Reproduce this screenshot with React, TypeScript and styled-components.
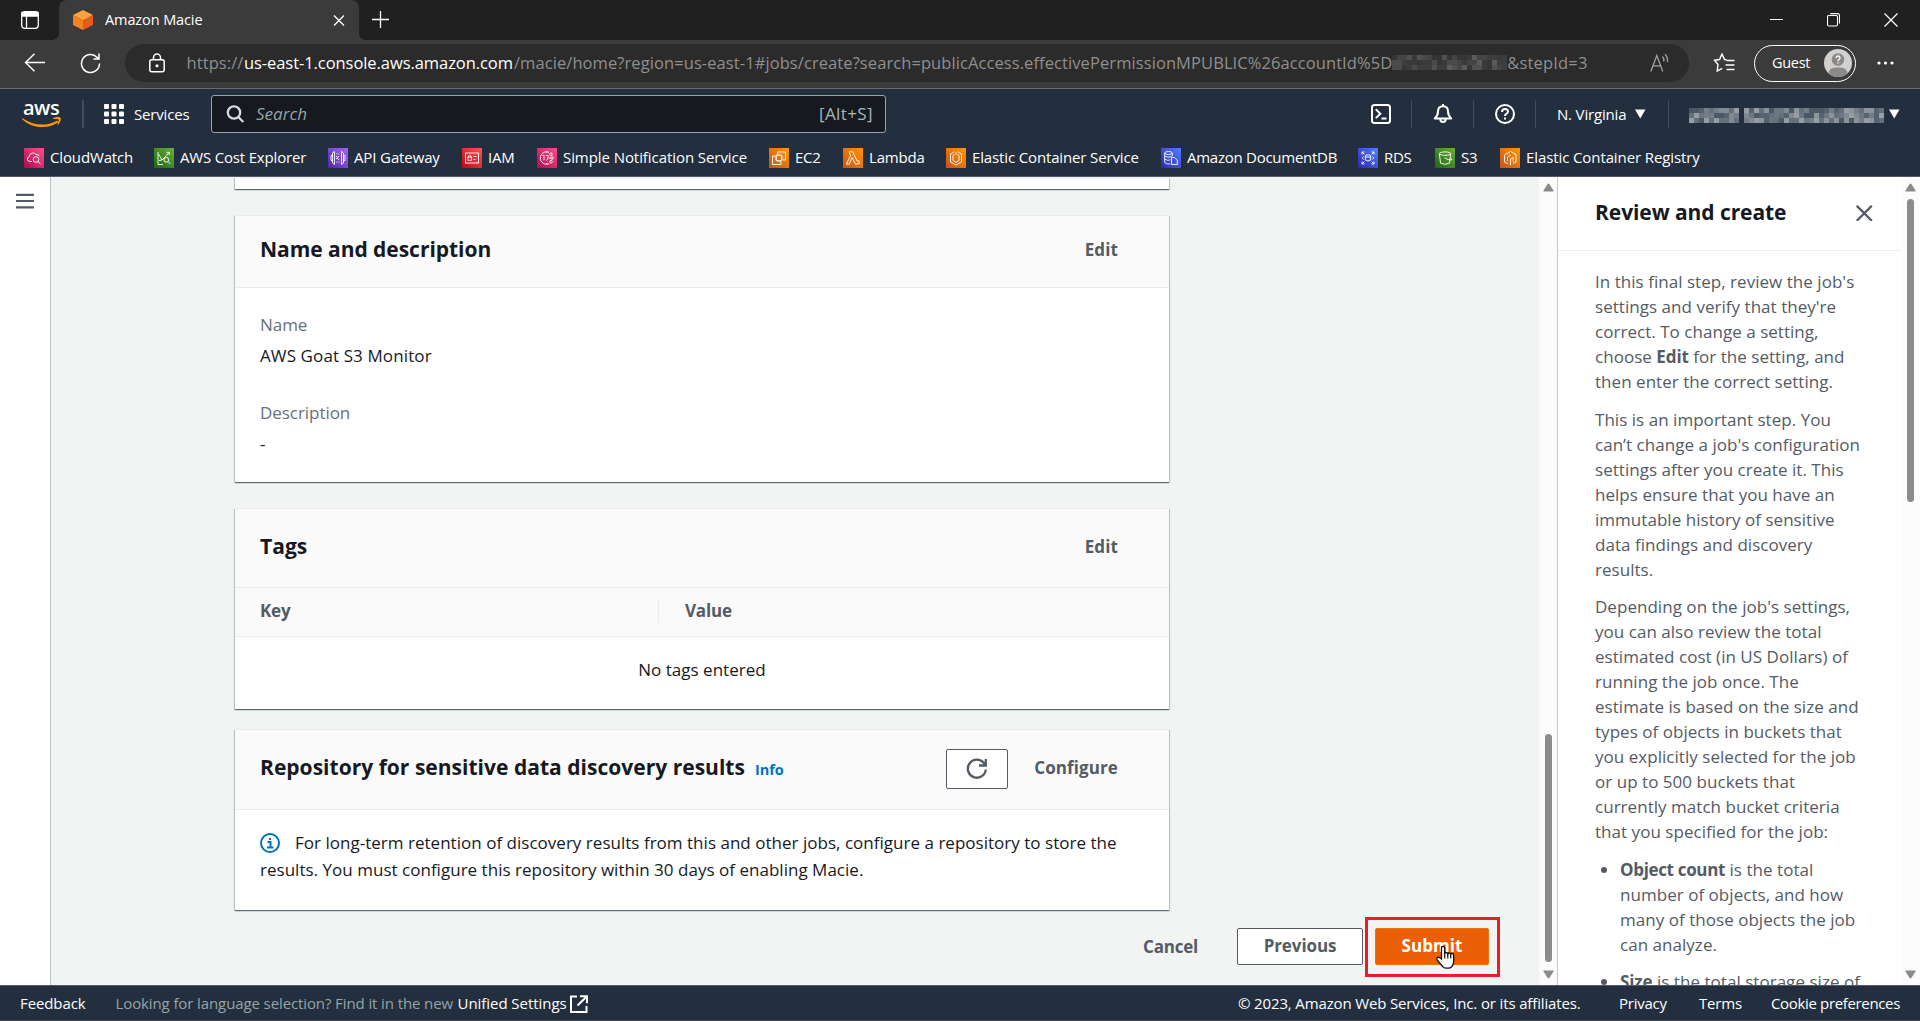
import React from 'react';
import styled, { createGlobalStyle } from 'styled-components';

const GlobalStyle = createGlobalStyle`
  * { box-sizing: border-box; }
  body { margin: 0; }
  svg { display: block; flex: none; }
`;

const Page = styled.div`
  display: flex;
  flex-direction: column;
  width: 1920px;
  height: 1021px;
  overflow: hidden;
  background: #f2f3f3;
  color: #16191f;
  font: 400 17px/27.5px 'Open Sans', 'Noto Sans', sans-serif;
  letter-spacing: 0.015px;
  white-space: nowrap;
`;

/* ---------- browser chrome ---------- */

const TabStrip = styled.div`
  display: flex;
  align-items: center;
  height: 40px;
  background: #202020;
  color: #fff;
  padding-left: 21px;
`;

const BrowserTab = styled.div`
  position: relative;
  display: flex;
  align-items: center;
  width: 300px;
  height: 40px;
  margin: 0 13px 0 20px;
  padding: 0 14px;
  border-radius: 8px 8px 0 0;
  background: #3b3b3b;
  &::before,
  &::after {
    content: '';
    position: absolute;
    bottom: 0;
    width: 6px;
    height: 6px;
  }
  &::before {
    left: -6px;
    background: radial-gradient(circle at 0 0, transparent 5.5px, #3b3b3b 6px);
  }
  &::after {
    right: -6px;
    background: radial-gradient(circle at 100% 0, transparent 5.5px, #3b3b3b 6px);
  }
`;

const TabTitle = styled.span`
  flex: 1;
  margin-left: 12px;
  font-size: 14.5px;
  letter-spacing: -0.1px;
`;

const WindowButtons = styled.div`
  display: flex;
  gap: 44px;
  margin-left: auto;
  padding-right: 22px;
`;

const Toolbar = styled.div`
  display: flex;
  align-items: center;
  height: 49px;
  padding: 0 0 2px 24px;
  background: #3b3b3b;
  border-bottom: 1px solid #6c6c6a;
`;

const ToolIcon = styled.span<{ $gap: number }>`
  margin-right: ${(p) => p.$gap}px;
`;

const AddressBar = styled.div`
  display: flex;
  flex: none;
  align-items: center;
  width: 1564px;
  height: 38px;
  margin-top: -1px;
  padding: 0 19px 0 24px;
  border-radius: 19px;
  background: #2b2b2b;
`;

const Url = styled.div`
  display: flex;
  align-items: center;
  flex: 1;
  margin-left: 21.5px;
  color: #8f8f8f;
  font-size: 16.5px;
  letter-spacing: 0.083px;
`;

const UrlHost = styled.span`
  margin: 0 1px 0 0.5px;
  color: #fff;
  letter-spacing: -0.065px;
`;

const UrlTail = styled.span`
  letter-spacing: 0.18px;
`;

const Profile = styled.div`
  display: flex;
  align-items: center;
  justify-content: space-between;
  width: 102px;
  height: 37px;
  margin: 0 21px 0 19px;
  padding: 0 3px 0 17px;
  border: 1.5px solid #fff;
  border-radius: 19px;
  color: #fff;
  font-size: 14.5px;
  letter-spacing: -0.3px;
`;

/* ---------- console header ---------- */

const ConsoleHeader = styled.header`
  height: 88px;
  background: #232f3e;
  border-bottom: 1px solid #545b64;
  color: #fff;
  font-weight: 500;
  font-size: 15px;
  letter-spacing: -0.14px;
`;

const HeaderRow = styled.div`
  display: flex;
  align-items: center;
  height: 50px;
  padding-left: 22px;
`;

const Divider = styled.i<{ $before: number; $after: number; $width?: number }>`
  width: ${(p) => p.$width ?? 1}px;
  height: 28px;
  margin: 0 ${(p) => p.$after}px 0 ${(p) => p.$before}px;
  background: #414d5c;
`;

const ServicesLabel = styled.span`
  width: 77px;
  margin: 1px 0 0 10px;
  letter-spacing: -0.18px;
`;

const SearchBox = styled.div`
  display: flex;
  align-items: center;
  width: 675px;
  height: 38px;
  padding: 0 12px 0 14px;
  border: 1px solid #95a5a6;
  border-radius: 3px;
  background: #16191f;
  color: #aab7b8;
  font-weight: 400;
  font-size: 17px;
`;

const Placeholder = styled.em`
  flex: 1;
  margin-left: 11px;
  color: #95a5a6;
  letter-spacing: 0.02px;
`;

const Shortcut = styled.span`
  letter-spacing: 0.4px;
`;

const HeaderTools = styled.div`
  display: flex;
  align-items: center;
  margin-left: 485px;
`;

const Region = styled.span`
  width: 78px;
  margin-top: 1px;
  letter-spacing: -0.17px;
`;

const AccountName = styled.span`
  display: flex;
  gap: 5px;
  margin: 3px 5px 0 0;
`;

const Favorites = styled.nav`
  display: flex;
  align-items: center;
  height: 37px;
  padding-left: 24px;
`;

const Favorite = styled.a<{ $width: number; $track: number }>`
  display: flex;
  align-items: center;
  gap: 6px;
  width: ${(p) => p.$width}px;
  letter-spacing: ${(p) => p.$track}px;
`;

/* ---------- main area ---------- */

const Workspace = styled.div`
  display: flex;
  height: 808px;
  overflow: hidden;
`;

const NavRail = styled.aside`
  width: 51px;
  padding: 16px 0 0 16px;
  border-right: 1px solid #bcc3c4;
  background: #fff;
`;

const Main = styled.main`
  width: 1488px;
  padding-left: 184px;
`;

const Card = styled.section<{ $height: number; $gap: number }>`
  width: 934px;
  height: ${(p) => p.$height}px;
  margin-bottom: ${(p) => p.$gap}px;
  border-top: 1px solid #eaeded;
  background: #fff;
  box-shadow: 0 1px 1px 0 rgba(0, 28, 36, 0.45), 1px 1px 1px 0 rgba(0, 28, 36, 0.17),
    -1px 1px 1px 0 rgba(0, 28, 36, 0.17);
`;

const CardHeader = styled.div<{ $height: number; $pad?: number }>`
  display: flex;
  align-items: center;
  height: ${(p) => p.$height}px;
  padding: 0 51px ${(p) => p.$pad ?? 3}px 25px;
  border-bottom: 1px solid #eaeded;
  background: #fafafa;
`;

const Heading = styled.h2<{ $track?: number }>`
  margin: 0;
  color: #16191f;
  font-size: 21px;
  font-weight: 700;
  letter-spacing: ${(p) => p.$track ?? 0.02}px;
`;

const InfoLink = styled.a`
  margin: 4px 0 0 10px;
  color: #0073bb;
  font-size: 14.5px;
  font-weight: 700;
  letter-spacing: -0.05px;
`;

const TextAction = styled.span`
  margin-left: auto;
  color: #545b64;
  font-weight: 700;
  letter-spacing: 0.1px;
`;

const RefreshButton = styled.button`
  display: flex;
  align-items: center;
  justify-content: center;
  width: 62px;
  height: 40px;
  margin: 2px 26px 0 auto;
  padding: 0;
  border: 1px solid #545b64;
  border-radius: 2px;
  background: #fff;
  & + ${TextAction} {
    margin-left: 0;
  }
`;

const Fields = styled.dl`
  margin: 0;
  padding: 23px 25px;
`;

const FieldLabel = styled.dt`
  color: #687078;
  letter-spacing: -0.05px;
`;

const FieldValue = styled.dd`
  margin: 3px 0 30px;
  letter-spacing: 0.11px;
`;

const TableHead = styled.div`
  display: flex;
  align-items: center;
  height: 49px;
  padding: 0 25px 2px;
  border-bottom: 1px solid #eaeded;
  background: #fafafa;
  color: #545b64;
  font-weight: 700;
  letter-spacing: -0.2px;
`;

const Column = styled.span<{ $width?: number }>`
  width: ${(p) => (p.$width ? `${p.$width}px` : 'auto')};
  padding-left: ${(p) => (p.$width ? 0 : 26)}px;
  border-left: ${(p) => (p.$width ? 0 : 1)}px solid #eaeded;
  line-height: 24px;
`;

const EmptyRow = styled.p`
  margin: 0;
  padding-top: 19px;
  text-align: center;
`;

const Notice = styled.p`
  margin: 0;
  padding: 19px 25px;
  line-height: 27px;
  letter-spacing: 0.02px;
`;

const NoticeLine = styled.span`
  display: flex;
  align-items: center;
  gap: 15px;
`;

const WizardActions = styled.footer`
  display: flex;
  align-items: center;
  height: 37px;
  padding-left: 908px;
  color: #545b64;
  font-weight: 700;
`;

const CancelLink = styled.a`
  width: 94px;
  letter-spacing: -0.2px;
`;

const ActionButton = styled.button<{ $primary?: boolean }>`
  display: block;
  width: ${(p) => (p.$primary ? 114 : 126)}px;
  height: 37px;
  padding: 0 0 2px;
  border: 1px solid ${(p) => (p.$primary ? '#ec7211' : '#545b64')};
  border-radius: 2px;
  background: ${(p) => (p.$primary ? '#eb5f07' : '#fff')};
  color: ${(p) => (p.$primary ? '#fff' : '#545b64')};
  font: inherit;
  letter-spacing: ${(p) => (p.$primary ? 0.06 : -0.1)}px;
`;

const SubmitSlot = styled.div`
  position: relative;
  margin-left: 12px;
`;

const Highlight = styled.div`
  position: absolute;
  left: -10px;
  top: -11px;
  width: 135px;
  height: 60px;
  border: 3px solid #ed1c24;
`;

const Pointer = styled.svg`
  position: absolute;
  left: 60px;
  top: 17px;
`;

const ScrollTrack = styled.div<{ $width: number }>`
  display: flex;
  flex-direction: column;
  align-items: center;
  width: ${(p) => p.$width}px;
  height: 808px;
  padding: 6px 0 6px;
  background: #fcfcfc;
`;

const ScrollThumb = styled.i<{ $top: number; $height: number }>`
  width: 7px;
  height: ${(p) => p.$height}px;
  margin: ${(p) => p.$top}px 0 auto;
  border-radius: 4px;
  background: #8b8b8b;
`;

const HelpPanel = styled.aside`
  width: 344px;
  height: 808px;
  overflow: hidden;
  border-left: 1px solid #c4c9ca;
  background: #fff;
  color: #545b64;
  line-height: 25px;
`;

const HelpHeader = styled.div`
  display: flex;
  align-items: center;
  justify-content: space-between;
  height: 74px;
  padding: 0 28px 3px 37px;
  border-bottom: 1px solid #eaeded;
`;

const HelpBody = styled.div`
  padding: 18px 0 0 37px;
`;

const HelpText = styled.p`
  margin: 0 0 12.5px;
  letter-spacing: 0.035px;
`;

const HelpList = styled.ul`
  margin: 0;
  padding-left: 25px;
`;

const HelpItem = styled.li`
  margin-bottom: 12.5px;
  letter-spacing: 0.035px;
`;

const Strong = styled.b<{ $track?: number }>`
  letter-spacing: ${(p) => p.$track ?? -0.1}px;
`;

const PageFooter = styled.footer`
  display: flex;
  align-items: center;
  height: 36px;
  padding: 1px 0 0 20px;
  border-top: 1px solid #545b64;
  border-bottom: 1px solid #4b4b49;
  background: #232f3e;
  color: #fff;
  font-size: 15px;
  font-weight: 500;
`;

const FooterText = styled.span<{ $width: number; $track: number; $muted?: boolean }>`
  flex: none;
  width: ${(p) => p.$width}px;
  color: ${(p) => (p.$muted ? '#95a5a6' : '#fff')};
  font-weight: ${(p) => (p.$muted ? 400 : 500)};
  letter-spacing: ${(p) => p.$track}px;
`;

const LegalLinks = styled.div`
  display: flex;
  margin-left: auto;
`;

/* ---------- drawings ---------- */

const Caret = () => (
  <svg width="11" height="10" viewBox="0 0 11 10">
    <path d="M0 .5h10.5L5.25 9.5z" fill="#fff" />
  </svg>
);

const ScrollArrow = ({ down = false }: { down?: boolean }) => (
  <svg width="11" height="9" viewBox="0 0 11 9">
    <path
      d={down ? 'M1 .5h9q1 0 .5 1L6.5 7.8q-1 1.2-2 0L.5 1.5Q0 .5 1 .5z' : 'M1 8.5h9q1 0 .5-1L6.5 1.2q-1-1.2-2 0L.5 7.5q-.5 1 .5 1z'}
      fill="#8b8b8b"
    />
  </svg>
);

type MosaicProps = { cols: number; rows: number; cell: number; palette: string[] };

/* Redacted text: a grid of pixelated colour cells. */
const Mosaic = ({ cols, rows, cell, palette }: MosaicProps) => {
  const cells = [];
  let seed = cols * 31 + 7;
  for (let r = 0; r < rows; r++) {
    for (let c = 0; c < cols; c++) {
      seed = (seed * 1103515245 + 12345) % 2147483648;
      const pick = Math.floor(seed / 65536) % palette.length;
      cells.push(<rect key={`${r}-${c}`} x={c * cell} y={r * cell} width={cell} height={cell} fill={palette[pick]} />);
    }
  }
  return (
    <svg width={cols * cell} height={rows * cell} shapeRendering="crispEdges">
      {cells}
    </svg>
  );
};

const accountPalette = ['#6b7683', '#8c939b', '#56626f', '#737e88', '#989da2', '#4b5967', '#66707c', '#646f80', '#808a90'];
const urlPalette = ['#3a3a3b', '#505153', '#353536', '#434446', '#5a5b5d', '#3d3d3e', '#494a4b'];

type Glyph = 'watch' | 'cost' | 'api' | 'iam' | 'sns' | 'ec2' | 'lambda' | 'ecs' | 'docdb' | 'rds' | 's3' | 'ecr';

const tones: Record<string, [string, string]> = {
  pink: ['#b0084d', '#ff4f8b'],
  green: ['#1b660f', '#6cae3e'],
  purple: ['#4d27a8', '#a166ff'],
  red: ['#bd0816', '#ff5252'],
  orange: ['#c8511b', '#ff9900'],
  blue: ['#2e27ad', '#527fff'],
};

const glyphs: Record<Glyph, React.ReactNode> = {
  watch: (
    <>
      <path d="M8 13.5H6a2.6 2.6 0 0 1-.6-5.1A3.6 3.6 0 0 1 12 6.6a2.4 2.4 0 0 1 3.2 1.8" />
      <circle cx="12" cy="11.5" r="2.8" />
      <path d="m14 13.5 2.6 2.6" />
    </>
  ),
  cost: (
    <>
      <path d="M4 4v12.500h5M4.500 6l3.500 6 2-2 5-5.500M5 12.500l3-.5M12.500 4.300h2.800v2.700" />
      <circle cx="12.300" cy="11.800" r="2.400" />
      <path d="m14 13.600 2.400 2.400" />
    </>
  ),
  api: (
    <>
      <path d="M6.500 3.500 4.500 5v10l2 1.500zM13.500 3.500l2 1.500v10l-2 1.500zM4.500 7.500H3v5h1.500M15.500 7.500H17v5h-1.500" />
      <path d="M11 8 9.200 10l1.800 2" />
      <path d="M8.300 5.800h4M8.300 14.200h4M8.500 8v4" strokeDasharray="1 1" />
    </>
  ),
  iam: (
    <>
      <rect x="3.500" y="5" width="13" height="10" />
      <rect x="5.800" y="9.200" width="3.800" height="3" />
      <path d="M6.500 9V8q1.200-1.500 2.400 0v1M11.500 8.500h3M11.500 11.500h2" />
    </>
  ),
  sns: (
    <>
      <path d="M12 4.300a6.200 6.200 0 1 0 0 11.400M10 3.600V5M10 15v1.400" />
      <path d="M5.500 7.500H7v4.800M8.500 7.500h2.700v1.200l-1.500 3.800" />
      <circle cx="14" cy="6.300" r="1.300" />
      <circle cx="15" cy="10" r="1.300" />
      <circle cx="14" cy="13.700" r="1.300" />
      <path d="M11.500 10h2.200" />
    </>
  ),
  ec2: (
    <>
      <path d="M8.500 6.500V4h8v8H14M6.500 8H3.500v8.500h8.500V14" />
      <rect x="7.300" y="7.300" width="5.400" height="5.400" />
      <path d="M9 5.800v1.500M11 5.800v1.500M9 12.700v1.500M11 12.700v1.500M5.800 9h1.500M5.800 11h1.500M12.700 9h1.500M12.700 11h1.500" />
    </>
  ),
  lambda: (
    <path d="M6.500 3.800h3.200l4.500 9.400 1.500-.6 1 2.600-4.200 1.200-3.400-7-2.900 6.800H3.400l4.300-9.100-.6-1.200h-.6z" />
  ),
  ecs: (
    <>
      <path d="M8.200 3.800 4.500 6v8l5.500 3 5.500-3V6l-3.700-2.200" />
      <path d="M8.500 6.500 7 7.500v5l3 1.800 3-1.800v-5l-1.500-1M10 4v3" />
    </>
  ),
  docdb: (
    <>
      <ellipse cx="7.500" cy="5" rx="3.800" ry="1.500" />
      <path d="M3.700 5v9.500q1.500 2 5.500 1.400M3.700 8q3 2 7 .5M3.700 11q2.500 2 5.500 1M11.300 5v3" />
      <path d="M10.500 9.500h3l2.800 2.500v4.500h-5.800z" />
    </>
  ),
  rds: (
    <>
      <path d="M4 6.500V4h2.500M4 4l2.500 2.500M13.500 4H16v2.500M16 4l-2.500 2.500M4 13.500V16h2.500M4 16l2.500-2.500M13.500 16H16v-2.500M16 16l-2.500-2.500" />
      <ellipse cx="10" cy="8" rx="2.600" ry="1.200" />
      <path d="M7.400 8v4q2.600 2 5.200 0V8M5.500 8.500 4.300 10l1.200 1.500M14.500 8.500l1.200 1.500-1.200 1.500" />
    </>
  ),
  s3: (
    <>
      <ellipse cx="10" cy="5.600" rx="5.700" ry="1.700" />
      <path d="m4.300 5.800 1.300 9.400q4.400 2.200 8.800 0l1.300-9.400" />
      <path d="M9.500 9.800q4 2.500 7 2.300.6-1.200-1.300-2.300" />
    </>
  ),
  ecr: (
    <>
      <path d="M8 15.800 4.500 14V7l6-3.500 5.500 3v7.500L13 15.500" />
      <path d="M10.500 17v-6l2.700-1.700v5M7.500 13V9l3.500-2" />
    </>
  ),
};

const ServiceIcon = ({ tone, glyph }: { tone: string; glyph: Glyph }) => (
  <svg width="20" height="20" viewBox="0 0 20 20" fill="none" stroke="#fff" strokeWidth=".9">
    <defs>
      <linearGradient id={`tone-${glyph}`} x1="0" y1="1" x2="1" y2="0">
        <stop offset="0" stopColor={tones[tone][0]} />
        <stop offset="1" stopColor={tones[tone][1]} />
      </linearGradient>
    </defs>
    <rect width="20" height="20" fill={`url(#tone-${glyph})`} stroke="none" />
    {glyphs[glyph]}
  </svg>
);

const AwsLogo = () => (
  <svg width="40" height="30" viewBox="0 -2 40 30">
    <text x="1" y="13.500" fill="#fff" fontFamily="Open Sans, sans-serif" fontSize="20" fontWeight="600" textLength="36.500">
      aws
    </text>
    <path d="M.5 17.300c11 7.800 24 8 34 2.600 1.300-.7 2.300.7 1 1.700C25.500 28.800 9.500 27.200.2 18.200c-.6-.6-.3-1.300.3-.9z" fill="#f90" />
    <path d="M31 17.300c2.600-1.700 7-1.300 7.600-.5.6.9-.2 5-2.700 7-.4.300-.8.100-.6-.3.600-1.400 1.800-4.400 1.200-5.100-.5-.7-3.700-.5-5.100-.3-.5 0-.7-.5-.4-.8z" fill="#f90" />
  </svg>
);

const favorites: { label: string; tone: string; glyph: Glyph; width: number; track: number }[] = [
  { label: 'CloudWatch', tone: 'pink', glyph: 'watch', width: 130, track: -0.14 },
  { label: 'AWS Cost Explorer', tone: 'green', glyph: 'cost', width: 174, track: -0.18 },
  { label: 'API Gateway', tone: 'purple', glyph: 'api', width: 134, track: -0.12 },
  { label: 'IAM', tone: 'red', glyph: 'iam', width: 75, track: -0.2 },
  { label: 'Simple Notification Service', tone: 'pink', glyph: 'sns', width: 232, track: -0.07 },
  { label: 'EC2', tone: 'orange', glyph: 'ec2', width: 74, track: -0.3 },
  { label: 'Lambda', tone: 'orange', glyph: 'lambda', width: 103, track: -0.2 },
  { label: 'Elastic Container Service', tone: 'orange', glyph: 'ecs', width: 215, track: -0.14 },
  { label: 'Amazon DocumentDB', tone: 'blue', glyph: 'docdb', width: 197, track: -0.26 },
  { label: 'RDS', tone: 'blue', glyph: 'rds', width: 77, track: -0.3 },
  { label: 'S3', tone: 'green', glyph: 's3', width: 65, track: -0.2 },
  { label: 'Elastic Container Registry', tone: 'orange', glyph: 'ecr', width: 210, track: -0.1 },
];

export default function App() {
  return (
    <Page>
      <GlobalStyle />

      <TabStrip>
        <svg width="18" height="18" viewBox="0 0 18 18" fill="none" stroke="#fff" strokeWidth="1.300">
          <rect x=".7" y=".7" width="16.600" height="16.600" rx="3" />
          <path d="M1 1.500h16V5H1z" fill="#fff" />
          <path d="M5.500 5v12" />
        </svg>
        <BrowserTab>
          <svg width="20" height="20" viewBox="0 0 20 20">
            <path d="M10 0l10 5-10 5.500L0 5z" fill="#f9a13a" />
            <path d="M0 5l10 5.500V20L0 15z" fill="#f58220" />
            <path d="M20 5l-10 5.500V20l10-5z" fill="#e8591c" />
          </svg>
          <TabTitle>Amazon Macie</TabTitle>
          <svg width="12" height="12" viewBox="0 0 12 12" stroke="#fff" strokeWidth="1.300">
            <path d="M1 1.500l10 10M11 1.500l-10 10" />
          </svg>
        </BrowserTab>
        <svg width="17" height="18" viewBox="0 0 17 18" stroke="#fff" strokeWidth="1.300">
          <path d="M8.500 0v17M0 8.500h17" />
        </svg>
        <WindowButtons>
          <svg width="13" height="14" viewBox="0 0 13 14" stroke="#fff">
            <path d="M0 6.500h13" />
          </svg>
          <svg width="13" height="14" viewBox="0 0 13 14" fill="none" stroke="#fff" strokeWidth="1.100">
            <rect x=".5" y="2.500" width="10" height="10.500" rx="1.500" />
            <path d="M3 .6h7.500q2 0 2 2v8" />
          </svg>
          <svg width="14" height="14" viewBox="0 0 14 14" stroke="#fff" strokeWidth="1.200">
            <path d="M.5 .5l13 13M13.500 .5l-13 13" />
          </svg>
        </WindowButtons>
      </TabStrip>

      <Toolbar>
        <ToolIcon $gap={35}>
          <svg width="21" height="20" viewBox="0 0 21 20" fill="none" stroke="#fff" strokeWidth="1.400">
            <path d="M21 9.500H1.500M10.500 .7 1.500 9.500l9 8.800" />
          </svg>
        </ToolIcon>
        <ToolIcon $gap={24}>
          <svg width="21" height="21" viewBox="0 0 21 21" fill="none" stroke="#fff" strokeWidth="1.500">
            <path d="M19.500 10.500A9 9 0 1 1 17 4.300L18.500 6M19 .5V6h-5.500" />
          </svg>
        </ToolIcon>
        <AddressBar>
          <svg width="16" height="20" viewBox="0 0 16 20" fill="none" stroke="#fff" strokeWidth="1.500">
            <rect x=".8" y="6.800" width="14.400" height="12" rx="2" />
            <path d="M4.500 6.500V4.500a3.500 3.500 0 0 1 7 0v2" />
            <circle cx="8" cy="12.800" r=".8" fill="#fff" />
          </svg>
          <Url>
            <span>https://</span>
            <UrlHost>us-east-1.console.aws.amazon.com</UrlHost>
            <span>/macie/home?region=us-east-1#jobs/create?search=publicAccess.effectivePermissionMPUBLIC%26accountId%5D</span>
            <Mosaic cols={23} rows={3} cell={5} palette={urlPalette} />
            <UrlTail>&amp;stepId=3</UrlTail>
          </Url>
          <svg width="20" height="20" viewBox="0 0 20 20" fill="none" stroke="#a2a2a2" strokeWidth="1.300">
            <path d="M.8 18.500 6.800 2.500l6 16M3 12.800h7.600M12.500 3.500q1.800 2 1.300 5M15 1.200q3.200 3.300 2.400 8" />
          </svg>
        </AddressBar>
        <ToolIcon $gap={0}>
          <svg width="46" height="20" viewBox="-25 0 46 20" fill="none" stroke="#fff" strokeWidth="1.400">
            <path d="M12.500 6.800 10.500 6.500 8 1 5.500 6.500l-5 .8L4 11.500 3.200 18l5-2.700M12.500 7.500H20.500M11.500 12h9M12.500 16.500h8" />
          </svg>
        </ToolIcon>
        <Profile>
          Guest
          <svg width="28" height="28" viewBox="0 0 28 28">
            <circle cx="14" cy="14" r="14" fill="#d3d1cf" />
            <path d="M4.500 24.300C5 19.500 9 18.500 14 18.500s9 1 9.500 5.800A14 14 0 0 1 4.500 24.300z" fill="#8c8a88" />
            <circle cx="14" cy="10.500" r="6.300" fill="#8c8a88" />
            <path d="M12 9q.2-2 2-2t2 1.800q0 1-1.200 1.800-.8.600-.8 1.600M14 13.300v1.300" fill="none" stroke="#fff" strokeWidth="1.300" />
          </svg>
        </Profile>
        <svg width="17" height="4" viewBox="0 0 17 4" fill="#fff">
          <circle cx="2" cy="2" r="1.600" />
          <circle cx="8.500" cy="2" r="1.600" />
          <circle cx="15" cy="2" r="1.600" />
        </svg>
      </Toolbar>

      <ConsoleHeader>
        <HeaderRow>
          <AwsLogo />
          <Divider $before={20} $after={20} $width={2} />
          <svg width="20" height="20" viewBox="0 0 20 20" fill="#fff">
            {[0, 7.5, 15].map((y) => [0, 7.5, 15].map((x) => <rect key={`${x}-${y}`} x={x} y={y} width="5" height="5" rx="1" />))}
          </svg>
          <ServicesLabel>Services</ServicesLabel>
          <SearchBox>
            <svg width="19" height="18" viewBox="0 0 19 18" fill="none" stroke="#d5dbdb" strokeWidth="2.300">
              <circle cx="8" cy="7.500" r="6.200" />
              <path d="m12.300 12 5 5" />
            </svg>
            <Placeholder>Search</Placeholder>
            <Shortcut>[Alt+S]</Shortcut>
          </SearchBox>
          <HeaderTools>
            <svg width="20" height="20" viewBox="0 0 20 20" fill="none" stroke="#fff" strokeWidth="2">
              <rect x="1" y="1" width="18" height="18" rx="2.500" />
              <path d="m4.800 5.300 4.500 4.400-4.500 4.400M10.500 14.500h5" />
            </svg>
            <Divider $before={20} $after={21} />
            <svg width="20" height="20" viewBox="0 0 20 20" fill="none" stroke="#fff" strokeWidth="2">
              <path d="M10 2.200c-3.300 0-5 2.300-5 5.300 0 3-1.200 5-3.200 7h16.400c-2-2-3.200-4-3.200-7 0-3-1.700-5.300-5-5.300z" strokeLinejoin="round" />
              <path d="M10 0v3M7.300 15a2.700 3 0 0 0 5.400 0" />
            </svg>
            <Divider $before={20} $after={21} />
            <svg width="20" height="20" viewBox="0 0 20 20" fill="none" stroke="#fff" strokeWidth="2">
              <circle cx="10" cy="10" r="9" />
              <path d="M7 8q0-3 3-3t3 2.600q0 1.400-1.700 2.300-1.300.7-1.300 2.100M10 13.500v2" />
            </svg>
            <Divider $before={20} $after={21} />
            <Region>N. Virginia</Region>
            <Caret />
            <Divider $before={22} $after={20} />
            <AccountName>
              <Mosaic cols={10} rows={3} cell={5} palette={accountPalette} />
              <Mosaic cols={28} rows={3} cell={5} palette={accountPalette} />
            </AccountName>
            <Caret />
          </HeaderTools>
        </HeaderRow>
        <Favorites>
          {favorites.map((f) => (
            <Favorite key={f.label} $width={f.width} $track={f.track}>
              <ServiceIcon tone={f.tone} glyph={f.glyph} />
              {f.label}
            </Favorite>
          ))}
        </Favorites>
      </ConsoleHeader>

      <Workspace>
        <NavRail>
          <svg width="18" height="17" viewBox="0 0 18 17" stroke="#545b64" strokeWidth="2.200">
            <path d="M0 1.800h18M0 8h18M0 14.300h18" />
          </svg>
        </NavRail>

        <Main>
          <Card $height={12} $gap={26} />

          <Card $height={267} $gap={26}>
            <CardHeader $height={72}>
              <Heading $track={-0.04}>Name and description</Heading>
              <TextAction>Edit</TextAction>
            </CardHeader>
            <Fields>
              <FieldLabel>Name</FieldLabel>
              <FieldValue>AWS Goat S3 Monitor</FieldValue>
              <FieldLabel>Description</FieldLabel>
              <FieldValue>-</FieldValue>
            </Fields>
          </Card>

          <Card $height={201} $gap={20}>
            <CardHeader $height={79}>
              <Heading>Tags</Heading>
              <TextAction>Edit</TextAction>
            </CardHeader>
            <TableHead>
              <Column $width={398}>Key</Column>
              <Column>Value</Column>
            </TableHead>
            <EmptyRow>No tags entered</EmptyRow>
          </Card>

          <Card $height={181} $gap={18}>
            <CardHeader $height={80}>
              <Heading>Repository for sensitive data discovery results</Heading>
              <InfoLink>Info</InfoLink>
              <RefreshButton>
                <svg width="22" height="22" viewBox="0 0 22 22" fill="none" stroke="#545b64" strokeWidth="2.300">
                  <path d="M19.800 11.500A9 9 0 1 1 17.800 5L19.500 7M19.800 1v6.500H13" />
                </svg>
              </RefreshButton>
              <TextAction>Configure</TextAction>
            </CardHeader>
            <Notice>
              <NoticeLine>
                <svg width="20" height="20" viewBox="0 0 20 20" fill="none" stroke="#0073bb" strokeWidth="2">
                  <circle cx="10" cy="10" r="9" />
                  <path d="M7.500 9h3v6M7 14.500h6.500M9 6h2" />
                </svg>
                For long-term retention of discovery results from this and other jobs, configure a repository to store the
              </NoticeLine>
              results. You must configure this repository within 30 days of enabling Macie.
            </Notice>
          </Card>

          <WizardActions>
            <CancelLink>Cancel</CancelLink>
            <ActionButton>Previous</ActionButton>
            <SubmitSlot>
              <ActionButton $primary>Submit</ActionButton>
              <Highlight />
              <Pointer width="21" height="25" viewBox="0 0 21 25">
                <path
                  d="M6.500 14V3.200q0-1.900 1.600-1.900t1.600 1.900V9q.3-1.300 1.600-1.300 1.200 0 1.500 1.300.5-1 1.500-1t1.400 1.400q.6-.9 1.500-.9 1.500 0 1.500 2V16q0 4-2 5.800-1.300 1.400-3.500 1.400h-2q-2.400 0-3.600-1.700L2.300 15.200q-1.200-1.700 0-2.600 1.200-.8 2.500.2z"
                  fill="#fff"
                  stroke="#111"
                  strokeWidth="1.300"
                />
                <path d="M9.700 8.500v5M12.800 8.800v4.700M15.700 9.800v3.700" stroke="#111" strokeWidth="1.200" />
              </Pointer>
            </SubmitSlot>
          </WizardActions>
        </Main>

        <ScrollTrack $width={18}>
          <ScrollArrow />
          <ScrollThumb $top={542} $height={228} />
          <ScrollArrow down />
        </ScrollTrack>

        <HelpPanel>
          <HelpHeader>
            <Heading $track={-0.07}>Review and create</Heading>
            <svg width="17" height="17" viewBox="0 0 17 17" stroke="#545b64" strokeWidth="2.300">
              <path d="M.8 1.800l15 15M15.800 1.800l-15 15" />
            </svg>
          </HelpHeader>
          <HelpBody>
            <HelpText>
              In this final step, review the job's
              <br />
              settings and verify that they're
              <br />
              correct. To change a setting,
              <br />
              choose <Strong>Edit</Strong> for the setting, and
              <br />
              then enter the correct setting.
            </HelpText>
            <HelpText>
              This is an important step. You
              <br />
              can’t change a job's configuration
              <br />
              settings after you create it. This
              <br />
              helps ensure that you have an
              <br />
              immutable history of sensitive
              <br />
              data findings and discovery
              <br />
              results.
            </HelpText>
            <HelpText>
              Depending on the job's settings,
              <br />
              you can also review the total
              <br />
              estimated cost (in US Dollars) of
              <br />
              running the job once. The
              <br />
              estimate is based on the size and
              <br />
              types of objects in buckets that
              <br />
              you explicitly selected for the job
              <br />
              or up to 500 buckets that
              <br />
              currently match bucket criteria
              <br />
              that you specified for the job:
            </HelpText>
            <HelpList>
              <HelpItem>
                <Strong $track={-0.33}>Object count</Strong> is the total
                <br />
                number of objects, and how
                <br />
                many of those objects the job
                <br />
                can analyze.
              </HelpItem>
              <HelpItem>
                <Strong>Size</Strong> is the total storage size of
              </HelpItem>
            </HelpList>
          </HelpBody>
        </HelpPanel>

        <ScrollTrack $width={19}>
          <ScrollArrow />
          <ScrollThumb $top={7} $height={303} />
          <ScrollArrow down />
        </ScrollTrack>
      </Workspace>

      <PageFooter>
        <FooterText $width={95.5} $track={-0.1}>Feedback</FooterText>
        <FooterText $width={342} $track={-0.107} $muted>
          Looking for language selection? Find it in the new
        </FooterText>
        <FooterText $width={112.5} $track={-0.05}>Unified Settings</FooterText>
        <svg width="18" height="18" viewBox="0 0 18 18" fill="none" stroke="#fff" strokeWidth="2">
          <path d="M7 1.500H1v15.500h15.500V11M10 1.200h7v7M16.500 1.700 7.500 10.500" />
        </svg>
        <LegalLinks>
          <FooterText $width={381} $track={-0.14}>© 2023, Amazon Web Services, Inc. or its affiliates.</FooterText>
          <FooterText $width={80} $track={-0.25}>Privacy</FooterText>
          <FooterText $width={72} $track={-0.2}>Terms</FooterText>
          <FooterText $width={149} $track={-0.344}>Cookie preferences</FooterText>
        </LegalLinks>
      </PageFooter>
    </Page>
  );
}
